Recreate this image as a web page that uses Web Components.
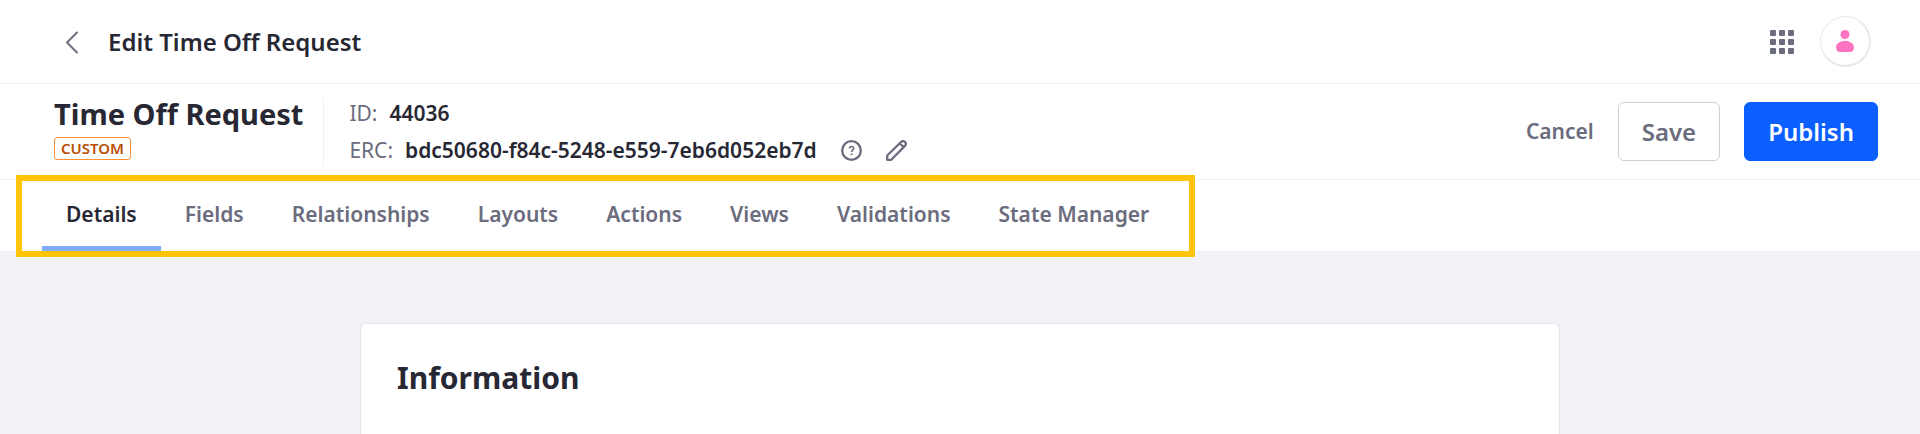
<!DOCTYPE html>
<html lang="en">
<head>
<meta charset="utf-8">
<title>Edit Time Off Request</title>
<style>
  body { margin: 0; background: #f1f2f5; color: #272833; font-family: "Noto Sans", sans-serif; font-size: 21px; line-height: 32px; }
</style>
</head>
<body>
<object-editor></object-editor>

<template id="app-header">
  <style>
    :host { display: flex; align-items: center; justify-content: space-between; box-sizing: border-box; min-height: 84px; padding: 0 49px 0 54px; background: #fff; border-bottom: 1px solid #f1f2f5; }
    nav, .tools { display: flex; align-items: center; }
    nav { gap: 18px; }
    a { display: grid; place-items: center; width: 36px; height: 36px; }
    h1 { margin: 0; font-size: 24px; font-weight: 600; line-height: 36px; }
    .tools { gap: 26px; }
    button { display: grid; place-items: center; padding: 0; border: 0; background: none; }
    .avatar { width: 51px; height: 51px; box-sizing: border-box; border-radius: 50%; background: #fff; border: 1px solid #e7e7ed; border-right-width: 2px; border-bottom-width: 2px; }
    svg { display: block; }
  </style>
  <nav aria-label="Back">
    <a href="#objects" aria-label="Back to objects"><svg width="36" height="36" viewBox="0 0 36 36" fill="none" stroke="#6b6c7e" stroke-width="2" stroke-linecap="round" stroke-linejoin="round"><path d="M23 8.500 13 18.500 23 28.500"/></svg></a>
    <h1><slot></slot></h1>
  </nav>
  <div class="tools">
    <button type="button" aria-label="Applications"><svg width="24" height="24" fill="#6b6c7e"><g id="r"><rect width="6" height="6" rx="1"/><rect x="9" width="6" height="6" rx="1"/><rect x="18" width="6" height="6" rx="1"/></g><use href="#r" y="9"/><use href="#r" y="18"/></svg></button>
    <button type="button" class="avatar" aria-label="User profile"><svg width="18" height="22" fill="#ff73c3"><circle cx="9" cy="4.500" r="4.500"/><path d="M9 11C4 11 0 13.500 0 17.500C0 20 1.500 22 4 22H14C16.500 22 18 20 18 17.500C18 13.500 14 11 9 11Z"/></svg></button>
  </div>
</template>

<template id="object-bar">
  <style>
    :host { display: flex; align-items: center; justify-content: space-between; box-sizing: border-box; min-height: 96px; padding: 0 42px 0 54px; background: #fff; border-bottom: 1px solid #f1f2f5; }
    .info, .actions, dl div { display: flex; align-items: center; }
    .name { padding: 0 20px 6px 0; }
    h2 { margin: 0; font-size: 29px; line-height: 34px; font-weight: 700; }
    .badge { display: block; width: max-content; margin-top: 6px; padding: 0 6px; border: 1px solid #ff8f39; border-radius: 3px; color: #b95000; font-size: 15px; line-height: 21px; font-weight: 600; text-transform: uppercase; }
    dl { margin: 0; padding-left: 25px; border-left: 1px solid #f1f2f5; display: grid; gap: 4px; }
    dl div { min-height: 33px; }
    dt { color: #6b6c7e; margin-right: 12px; }
    dd { margin: 0; font-weight: 600; }
    dl button { width: 21px; height: 21px; padding: 0; border: 0; background: none; margin-left: 24px; }
    svg { display: block; }
    .actions { gap: 24px; }
    .actions button { font: 600 24px/35px "Noto Sans", sans-serif; padding: 11px 23px; border-radius: 6px; border: 1px solid #cdced9; color: #6b6c7e; background: #fff; }
    .actions .cancel { font-size: 21px; padding: 0; border: 0; background: none; }
    .actions .publish { background: #0b5fff; border-color: #0b5fff; color: #fff; }
  </style>
  <div class="info">
    <div class="name"><h2><slot></slot></h2><span class="badge">Custom</span></div>
    <dl>
      <div><dt>ID:</dt><dd>44036</dd></div>
      <div><dt>ERC:</dt><dd>bdc50680-f84c-5248-e559-7eb6d052eb7d</dd>
        <button type="button" aria-label="Help"><svg width="21" height="21" fill="none" stroke="#6b6c7e"><circle cx="10.500" cy="10.500" r="9.300" stroke-width="2.300"/><path d="M8.500 8.500C8.500 5.800 12.700 5.800 12.700 8.300C12.700 10.200 10.600 10 10.600 12" stroke-width="1.600"/><circle cx="10.600" cy="14.200" r="1" fill="#6b6c7e" stroke="none"/></svg></button>
        <button type="button" aria-label="Edit external reference code"><svg width="21" height="21" viewBox="0 0 21 21" fill="none" stroke="#6b6c7e" stroke-width="2.300" stroke-linejoin="round"><path d="M1.200 19.800V15.500L15.300 1.800Q17.200 .3 18.900 1.900Q20.700 3.700 19.200 5.600L5.300 19.800ZM14 3.500 17.500 7"/></svg></button>
      </div>
    </dl>
  </div>
  <div class="actions"><button type="button" class="cancel">Cancel</button><button type="button">Save</button><button type="button" class="publish">Publish</button></div>
</template>

<template id="object-tabs">
  <style>
    :host { display: block; position: relative; background: #fff; padding-left: 42px; }
    nav { display: flex; width: max-content; }
    a { box-sizing: border-box; height: 71px; padding: 18px 24px 0; color: #6b6c7e; font-weight: 600; text-decoration: none; white-space: nowrap; }
    a[aria-current] { color: #272833; border-bottom: 5px solid #80acff; }
    .frame { position: absolute; left: 16px; top: -5px; bottom: -6px; width: 1179px; box-sizing: border-box; border: 6px solid #ffc408; pointer-events: none; }
  </style>
  <nav aria-label="Object sections">
    <a href="#details" aria-current="page">Details</a><a href="#fields">Fields</a><a href="#relationships">Relationships</a><a href="#layouts">Layouts</a><a href="#actions">Actions</a><a href="#views">Views</a><a href="#validations">Validations</a><a href="#state">State Manager</a>
  </nav>
  <div class="frame"></div>
</template>

<template id="object-sheet">
  <style>
    :host { display: block; box-sizing: border-box; max-width: 1200px; margin: 72px auto 0; padding: 36px 36px 38px; background: #fff; border: 1px solid #e7e7ed; border-bottom: 0; border-radius: 6px 6px 0 0; }
    h2 { margin: 0; font-size: 30px; line-height: 36px; font-weight: 700; }
  </style>
  <h2><slot></slot></h2>
</template>

<template id="object-editor">
  <style>
    :host { display: block; }
    main { display: block; }
  </style>
  <app-header>Edit Time Off Request</app-header>
  <object-bar>Time Off Request</object-bar>
  <object-tabs></object-tabs>
  <main><object-sheet>Information</object-sheet></main>
</template>

<script>
  for (const name of ["app-header", "object-bar", "object-tabs", "object-sheet", "object-editor"]) {
    customElements.define(name, class extends HTMLElement {
      constructor() {
        super();
        this.attachShadow({ mode: "open" }).append(document.getElementById(name).content.cloneNode(true));
      }
    });
  }
</script>
</body>
</html>
